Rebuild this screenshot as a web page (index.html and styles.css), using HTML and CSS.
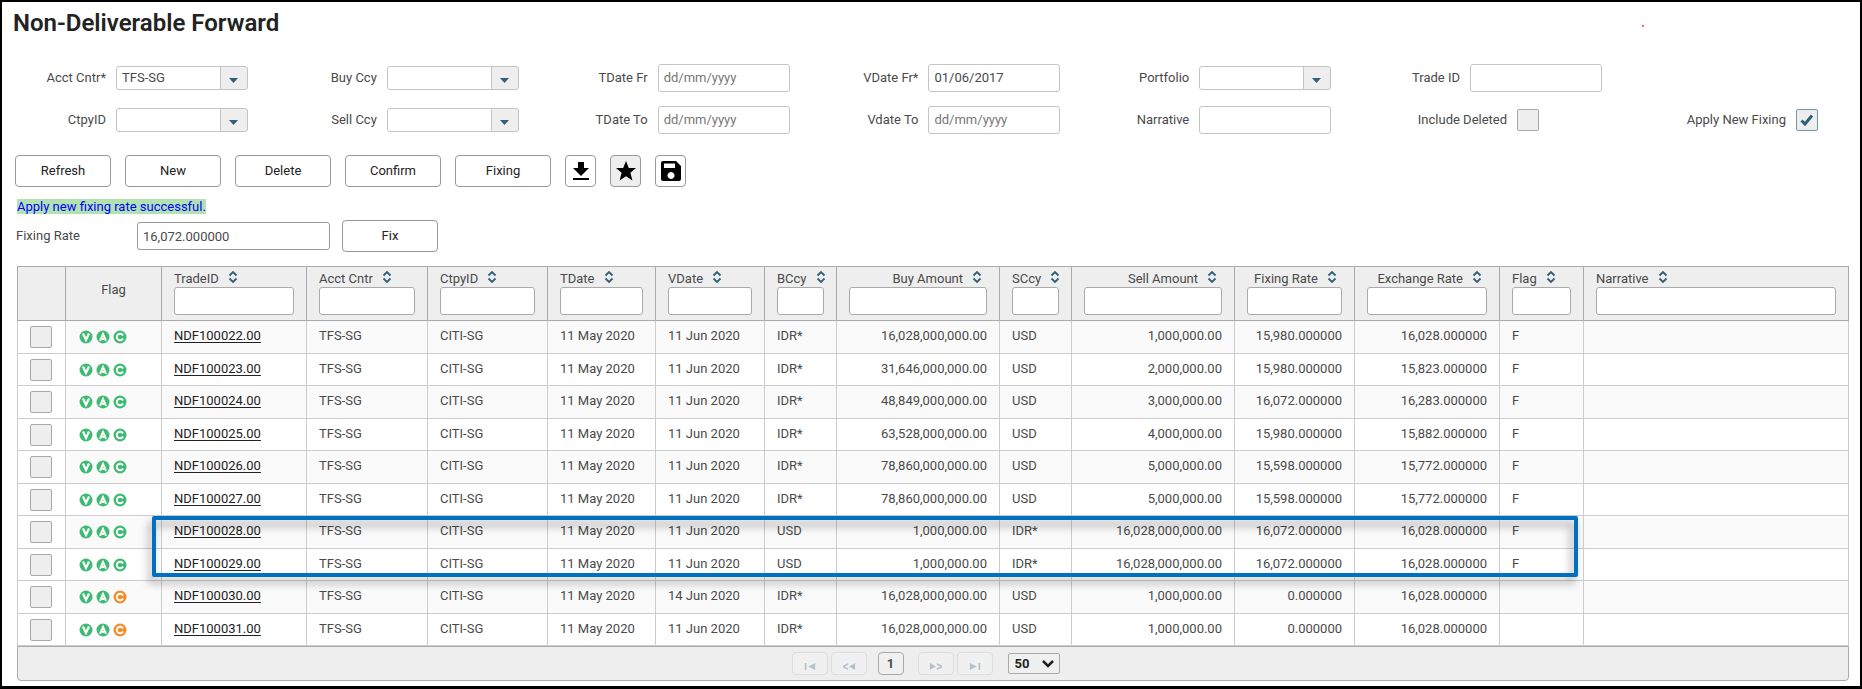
FILE: index.html
```html
<!DOCTYPE html>
<html lang="en">
<head>
<meta charset="UTF-8">
<meta name="viewport" content="width=device-width, initial-scale=1.0">
<title>Non-Deliverable Forward</title>
<link rel="stylesheet" href="styles.css">
</head>
<body>

<svg class="sprite" aria-hidden="true">
  <symbol id="sort" viewBox="0 0 10 12">
    <path d="M1.5 4.5 5 1l3.5 3.5M1.5 7.5 5 11l3.5-3.5" fill="none" stroke="#2e6078" stroke-width="1.8"/>
  </symbol>
  <symbol id="flag-v" viewBox="0 0 14 14">
    <circle cx="7" cy="7" r="6.5" fill="currentColor"/>
    <path d="M4 3.500 7 10l3-6.500" fill="none" stroke="#fff" stroke-width="2.2"/>
  </symbol>
  <symbol id="flag-a" viewBox="0 0 14 14">
    <circle cx="7" cy="7" r="6.5" fill="currentColor"/>
    <path d="M4 10.800 7 4l3 6.800M6 9h2" fill="none" stroke="#fff" stroke-width="2"/>
  </symbol>
  <symbol id="flag-c" viewBox="0 0 14 14">
    <circle cx="7" cy="7" r="6.5" fill="currentColor"/>
    <path d="M10 5.500A3.300 3.300 0 1 0 10 8.500" fill="none" stroke="#fff" stroke-width="1.900"/>
  </symbol>
</svg>

<main class="page">
  <h1>Non-Deliverable Forward</h1>
  <span class="dot"></span>

  <form class="filters">
    <div class="field">
      <label for="acctCntr">Acct Cntr*</label>
      <select id="acctCntr"><option>TFS-SG</option></select>
    </div>
    <div class="field">
      <label for="buyCcy">Buy Ccy</label>
      <select id="buyCcy"><option></option></select>
    </div>
    <div class="field">
      <label for="tdateFr">TDate Fr</label>
      <input type="text" id="tdateFr" placeholder="dd/mm/yyyy">
    </div>
    <div class="field">
      <label for="vdateFr">VDate Fr*</label>
      <input type="text" id="vdateFr" value="01/06/2017" placeholder="dd/mm/yyyy">
    </div>
    <div class="field">
      <label for="portfolio">Portfolio</label>
      <select id="portfolio"><option></option></select>
    </div>
    <div class="field">
      <label for="tradeId">Trade ID</label>
      <input type="text" id="tradeId">
    </div>
    <div></div>

    <div class="field">
      <label for="ctpyId">CtpyID</label>
      <select id="ctpyId"><option></option></select>
    </div>
    <div class="field">
      <label for="sellCcy">Sell Ccy</label>
      <select id="sellCcy"><option></option></select>
    </div>
    <div class="field">
      <label for="tdateTo">TDate To</label>
      <input type="text" id="tdateTo" placeholder="dd/mm/yyyy">
    </div>
    <div class="field">
      <label for="vdateTo">Vdate To</label>
      <input type="text" id="vdateTo" placeholder="dd/mm/yyyy">
    </div>
    <div class="field">
      <label for="narrative">Narrative</label>
      <input type="text" id="narrative">
    </div>
    <div class="field field-check">
      <label for="includeDeleted">Include Deleted</label>
      <input type="checkbox" id="includeDeleted">
    </div>
    <div class="field field-end">
      <label for="applyFixing">Apply New Fixing</label>
      <input type="checkbox" id="applyFixing" checked>
    </div>
  </form>

  <div class="toolbar">
    <button class="btn">Refresh</button>
    <button class="btn">New</button>
    <button class="btn">Delete</button>
    <button class="btn">Confirm</button>
    <button class="btn">Fixing</button>
    <button class="btn icon" aria-label="Download">
      <svg width="18" height="20" viewBox="0 0 18 20"><path d="M6 1h6v6h5l-8 8-8-8h5zM1 17h16v2H1z"/></svg>
    </button>
    <button class="btn icon active" aria-label="Favourite">
      <svg width="22" height="22" viewBox="0 0 22 22"><path d="m11 1 2.8 7h7.2l-5.6 4.8 2 7.7L11 16.3l-6.400 4.200 2-7.700L1 8h7.200z"/></svg>
    </button>
    <button class="btn icon" aria-label="Save">
      <svg width="20" height="20" viewBox="0 0 20 20"><path fill-rule="evenodd" d="M2 0h13l5 5v13a2 2 0 0 1-2 2H2a2 2 0 0 1-2-2V2a2 2 0 0 1 2-2zM3 2.500v4.500h11V2.500zM10 11a3.500 3.500 0 1 0 .01 0z"/></svg>
    </button>
  </div>

  <p class="message"><span>Apply new fixing rate successful.</span></p>

  <div class="fixing">
    <label for="fixingRate">Fixing Rate</label>
    <input type="text" id="fixingRate" value="16,072.000000">
    <button class="btn">Fix</button>
  </div>

  <div class="grid">
    <table>
      <colgroup>
        <col class="w-check"><col class="w-icons"><col class="w-trade"><col class="w-acct"><col class="w-ctpy">
        <col class="w-tdate"><col class="w-vdate"><col class="w-ccy"><col class="w-amount"><col class="w-ccy">
        <col class="w-amount"><col class="w-rate"><col class="w-exch"><col class="w-flag"><col>
      </colgroup>
      <thead>
        <tr id="head">
          <th></th>
          <th class="center">Flag</th>
        </tr>
      </thead>
      <tbody id="rows"></tbody>
    </table>
    <div class="highlight"></div>
    <div class="pager">
      <button class="nav" disabled aria-label="First page">
        <svg width="12" height="7" viewBox="0 0 12 8"><path d="M0 0h2v8H0zM12 0v8L4 4z"/></svg>
      </button>
      <button class="nav" disabled aria-label="Previous page">
        <svg width="14" height="7" viewBox="0 0 14 8"><path d="M14 0v8L7 4zM6 0v2L2 4l4 2v2L0 5V3z"/></svg>
      </button>
      <button class="current">1</button>
      <button class="nav" disabled aria-label="Next page">
        <svg width="14" height="7" viewBox="0 0 14 8"><path d="M0 0v8l7-4zM8 0v2l4 2-4 2v2l6-3V3z"/></svg>
      </button>
      <button class="nav" disabled aria-label="Last page">
        <svg width="12" height="7" viewBox="0 0 12 8"><path d="M10 0h2v8h-2zM0 0v8l8-4z"/></svg>
      </button>
      <select aria-label="Rows per page"><option>50</option></select>
    </div>
  </div>
</main>

<script src="script.js"></script>
</body>
</html>
```
FILE: styles.css
```css
* {
  box-sizing: border-box;
}
body {
  margin: 0;
  font-family: Roboto, "Liberation Sans", sans-serif;
  font-size: 13px;
  line-height: 16px;
  color: #4a4a4a;
  background: #fff;
}
button, input, select {
  font: inherit;
  color: inherit;
  margin: 0;
}
.sprite {
  display: none;
}
.page {
  position: relative;
  min-height: 100vh;
  border: 2px solid #000;
  border-bottom-width: 3px;
}
h1 {
  margin: 0;
  padding: 7px 11px 0;
  font-size: 24px;
  line-height: 28px;
  font-weight: 600;
  color: #222;
}
.dot {
  position: absolute;
  top: 23px;
  right: 216px;
  width: 2px;
  height: 2px;
  background: #ff6a5a;
}

/* Filters */
.filters {
  display: grid;
  grid-template-columns: repeat(6, 7fr) 6fr;
  row-gap: 14px;
  padding: 27px 0 0 1px;
}
.field {
  display: flex;
  align-items: center;
  height: 28px;
  gap: 10px;
}
.field label {
  width: 103px;
  text-align: right;
}
.field input[type="text"], .field select {
  width: 132px;
}
.field input[type="text"] {
  padding-bottom: 2px;
}
.field-check label {
  width: 150px;
}
.field-end {
  justify-content: flex-end;
  padding-right: 42px;
}
.field-end label {
  width: auto;
}
input[type="text"] {
  height: 28px;
  padding: 0 5px;
  border: 1px solid #c4c4c4;
  border-radius: 3px;
  background: #fff;
}
input::placeholder {
  color: #777;
}
.field select {
  appearance: none;
  height: 24px;
  padding: 0 5px;
  border: 1px solid #c4c4c4;
  border-radius: 3px;
  background:
    url("data:image/svg+xml,%3Csvg xmlns='http://www.w3.org/2000/svg' width='10' height='6'%3E%3Cpath d='M0 0h9L4.500 5z' fill='%232e6078'/%3E%3C/svg%3E") right 8px top 11px no-repeat,
    linear-gradient(90deg, #c4c4c4 1px, #eee 1px) right / 27px 100% no-repeat,
    #fff;
}
input[type="checkbox"] {
  appearance: none;
  display: block;
  width: 22px;
  height: 22px;
  border: 1px solid #a8a8a8;
  border-radius: 2px;
  background: #eee;
}
input[type="checkbox"]:checked {
  border-color: #6d96aa;
  background: #eee url("data:image/svg+xml,%3Csvg xmlns='http://www.w3.org/2000/svg' width='14' height='12'%3E%3Cpath d='M1.500 6.500 5 10l7-8.500' fill='none' stroke='%232e6078' stroke-width='3'/%3E%3C/svg%3E") center no-repeat;
}

/* Buttons */
.toolbar {
  display: flex;
  gap: 14px;
  padding: 21px 13px 0;
}
.btn {
  width: 96px;
  height: 32px;
  padding: 0;
  border: 1px solid #999;
  border-radius: 4px;
  background: #fff;
  color: #222;
}
.btn.icon {
  display: flex;
  align-items: center;
  justify-content: center;
  width: 31px;
  color: #000;
}
.btn.active {
  background: #eee;
}
.message {
  margin: 0;
  padding: 12px 15px 0;
  color: #00f;
}
.message span {
  background: #b2e2b2;
}
.fixing {
  display: flex;
  align-items: center;
  padding: 5px 14px 0;
}
.fixing label {
  width: 121px;
}
.fixing input[type="text"] {
  width: 193px;
  margin-right: 12px;
  border-color: #999;
}

/* Trades */
.grid {
  position: relative;
  margin: 14px 11px 5px 15px;
}
table {
  width: 100%;
  table-layout: fixed;
  border-collapse: collapse;
}
.w-check { width: 48px; }
.w-icons { width: 96px; }
.w-trade { width: 145px; }
.w-acct { width: 121px; }
.w-ctpy { width: 120px; }
.w-tdate { width: 108px; }
.w-vdate { width: 109px; }
.w-ccy { width: 72px; }
.w-amount { width: 163px; }
.w-rate { width: 120px; }
.w-exch { width: 145px; }
.w-flag { width: 84px; }
th, td {
  padding: 0 12px 2px;
  border: 1px solid #ccc;
  text-align: left;
  white-space: nowrap;
}
th {
  height: 54px;
  border-color: #aaa;
  background: #eee;
  font-weight: 400;
}
th input[type="text"] {
  display: block;
  width: 100%;
  border-color: #aaa;
}
th svg {
  width: 10px;
  height: 12px;
  margin: 0 5px 0 9px;
}
td {
  height: 32px;
}
tr:nth-child(odd) td {
  height: 33px;
  background: #fafafa;
}
tbody tr td:first-child {
  background: #fff;
}
td:nth-child(-n+2) {
  padding-bottom: 0;
}
.num {
  text-align: right;
}
.center {
  padding-bottom: 8px;
  text-align: center;
}
td a {
  color: #222;
  text-underline-offset: 2px;
}
.flags {
  display: flex;
  gap: 3px;
  padding-left: 1px;
  color: #3fba73;
}
.flags svg {
  width: 14px;
  height: 14px;
}
.flags .pending {
  color: #f78b28;
}
.highlight {
  position: absolute;
  top: 250px;
  left: 135px;
  width: 1426px;
  height: 61px;
  border: 4px solid #0070c0;
  border-radius: 2px;
  filter: drop-shadow(-3px 6px 4px rgba(0, 0, 0, 0.35));
  pointer-events: none;
}
.pager {
  display: flex;
  align-items: center;
  justify-content: center;
  gap: 3px;
  height: 35px;
  padding-right: 15px;
  border: 1px solid #aaa;
  border-radius: 0 0 4px 4px;
  background: #eee;
}
.pager button {
  display: flex;
  align-items: center;
  justify-content: center;
  width: 36px;
  height: 23px;
  padding: 0;
  border: 1px solid #ddd;
  border-radius: 4px;
  background: #f0f0f0;
}
.nav svg {
  margin-top: 6px;
  fill: #b4c3ca;
}
.pager .current {
  width: 26px;
  margin: 0 11px 0 8px;
  border-color: #aaa;
  font-weight: 700;
}
.pager select {
  appearance: none;
  width: 52px;
  height: 21px;
  margin-left: 12px;
  padding: 0 6px;
  border: 1px solid #aaa;
  border-radius: 2px;
  background: #f0f0f0 url("data:image/svg+xml,%3Csvg xmlns='http://www.w3.org/2000/svg' width='12' height='8'%3E%3Cpath d='M1 1l5 5 5-5' fill='none' stroke='%23222' stroke-width='2.500'/%3E%3C/svg%3E") right 5px center no-repeat;
  color: #222;
  font-weight: 700;
}
```
FILE: script.js
```js
const columns = [
  ['TradeID'], ['Acct Cntr'], ['CtpyID'], ['TDate'], ['VDate'], ['BCcy'],
  ['Buy Amount', 'num'], ['SCcy'], ['Sell Amount', 'num'], ['Fixing Rate', 'num'],
  ['Exchange Rate', 'num'], ['Flag'], ['Narrative']
];

// id, value date, buy ccy, buy amount, sell ccy, sell amount, fixing, exchange, flag
const trades = [
  ['NDF100022.00', '11 Jun 2020', 'IDR*', '16,028,000,000.00', 'USD', '1,000,000.00', '15,980.000000', '16,028.000000', 'F'],
  ['NDF100023.00', '11 Jun 2020', 'IDR*', '31,646,000,000.00', 'USD', '2,000,000.00', '15,980.000000', '15,823.000000', 'F'],
  ['NDF100024.00', '11 Jun 2020', 'IDR*', '48,849,000,000.00', 'USD', '3,000,000.00', '16,072.000000', '16,283.000000', 'F'],
  ['NDF100025.00', '11 Jun 2020', 'IDR*', '63,528,000,000.00', 'USD', '4,000,000.00', '15,980.000000', '15,882.000000', 'F'],
  ['NDF100026.00', '11 Jun 2020', 'IDR*', '78,860,000,000.00', 'USD', '5,000,000.00', '15,598.000000', '15,772.000000', 'F'],
  ['NDF100027.00', '11 Jun 2020', 'IDR*', '78,860,000,000.00', 'USD', '5,000,000.00', '15,598.000000', '15,772.000000', 'F'],
  ['NDF100028.00', '11 Jun 2020', 'USD', '1,000,000.00', 'IDR*', '16,028,000,000.00', '16,072.000000', '16,028.000000', 'F'],
  ['NDF100029.00', '11 Jun 2020', 'USD', '1,000,000.00', 'IDR*', '16,028,000,000.00', '16,072.000000', '16,028.000000', 'F'],
  ['NDF100030.00', '14 Jun 2020', 'IDR*', '16,028,000,000.00', 'USD', '1,000,000.00', '0.000000', '16,028.000000', ''],
  ['NDF100031.00', '11 Jun 2020', 'IDR*', '16,028,000,000.00', 'USD', '1,000,000.00', '0.000000', '16,028.000000', '']
];

document.getElementById('head').innerHTML += columns.map(([name, cls = '']) => `
  <th class="${cls}">${name}<svg><use href="#sort"/></svg><input type="text" aria-label="Filter ${name}"></th>`).join('');

document.getElementById('rows').innerHTML = trades.map(t => `
  <tr>
    <td><input type="checkbox" aria-label="Select ${t[0]}"></td>
    <td><div class="flags">
      <svg><use href="#flag-v"/></svg>
      <svg><use href="#flag-a"/></svg>
      <svg class="${t[8] ? '' : 'pending'}"><use href="#flag-c"/></svg>
    </div></td>
    <td><a href="#">${t[0]}</a></td>
    <td>TFS-SG</td>
    <td>CITI-SG</td>
    <td>11 May 2020</td>
    <td>${t[1]}</td>
    <td>${t[2]}</td>
    <td class="num">${t[3]}</td>
    <td>${t[4]}</td>
    <td class="num">${t[5]}</td>
    <td class="num">${t[6]}</td>
    <td class="num">${t[7]}</td>
    <td>${t[8]}</td>
    <td></td>
  </tr>`).join('');
```
